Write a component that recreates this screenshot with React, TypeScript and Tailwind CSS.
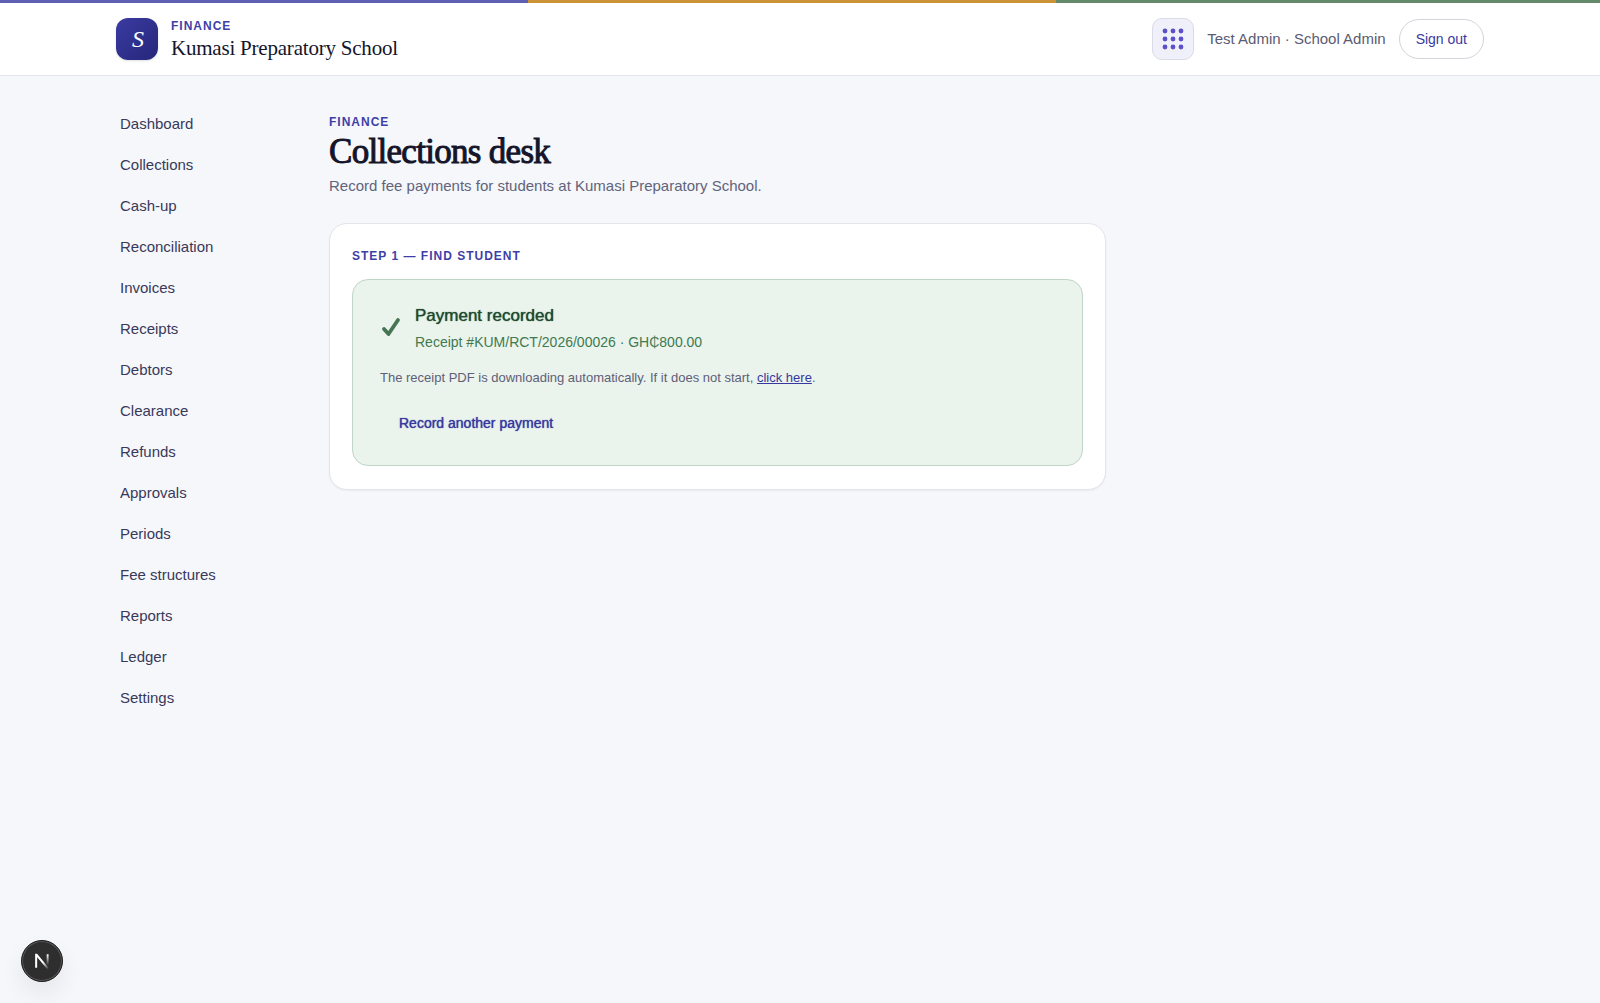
const navItems = [
  'Dashboard',
  'Collections',
  'Cash-up',
  'Reconciliation',
  'Invoices',
  'Receipts',
  'Debtors',
  'Clearance',
  'Refunds',
  'Approvals',
  'Periods',
  'Fee structures',
  'Reports',
  'Ledger',
  'Settings',
];

const SERIF = "font-['Liberation_Serif',serif]";

function AppsIcon() {
  return (
    <svg viewBox="0 0 22 22" className="w-[22px] h-[22px]" fill="#5b50c8" aria-hidden="true">
      {[3, 11, 19].map((cy) =>
        [3, 11, 19].map((cx) => <circle key={`${cx}-${cy}`} cx={cx} cy={cy} r="2.4" />)
      )}
    </svg>
  );
}

function Header() {
  return (
    <header className="bg-white border-b border-[#e3e5ec]">
      <div className="grid grid-cols-[33%_33%_34%] h-[3px]">
        <div className="bg-[#5e5fb0]" />
        <div className="bg-[#cc9238]" />
        <div className="bg-[#65896b]" />
      </div>
      <div className="max-w-[1368px] mx-auto py-[13px] flex items-center justify-between">
        <div className="flex items-center gap-[13px]">
          <div
            className={`w-[42px] h-[42px] rounded-xl bg-linear-to-br from-[#3b3ba3] to-[#26267a] shadow-sm flex items-center justify-center pl-0.5 text-white italic text-2xl ${SERIF}`}
          >
            S
          </div>
          <div className="pt-0.5">
            <p className="text-xs leading-4 font-bold tracking-[1px] text-[#3f3fa8]">FINANCE</p>
            <p className={`text-[21px] leading-7 tracking-[-0.01em] text-[#15152a] ${SERIF}`}>
              Kumasi Preparatory School
            </p>
          </div>
        </div>

        <div className="flex items-center gap-[13px]">
          <button
            type="button"
            aria-label="Switch app"
            className="w-[42px] h-[42px] rounded-[10px] bg-[#eff0fa] border border-[#dadbe8] flex items-center justify-center"
          >
            <AppsIcon />
          </button>
          <span className="text-[15px] text-[#5b5b73]">Test Admin · School Admin</span>
          <button
            type="button"
            className="h-10 px-4 rounded-full bg-white border border-[#d3d4da] text-sm text-[#3838a0]"
          >
            Sign out
          </button>
        </div>
      </div>
    </header>
  );
}

function Sidebar() {
  return (
    <nav className="w-[213px] shrink-0">
      <ul>
        {navItems.map((item) => (
          <li key={item}>
            <a href="#" className="block px-1 text-[15px] leading-[41px] text-[#39395a]">
              {item}
            </a>
          </li>
        ))}
      </ul>
    </nav>
  );
}

function PaymentRecorded() {
  return (
    <div className="rounded-2xl bg-[#eaf3ec] border border-[#c0d6c7] px-[27px] pt-[22px] pb-[22px]">
      <div className="flex items-center gap-3.5">
        <svg viewBox="0 0 21 24" className="w-[21px] h-6" fill="none" aria-hidden="true">
          <path
            d="M4 13 L8.5 18 L18 4"
            stroke="#457552"
            strokeWidth="3.8"
            strokeLinecap="round"
            strokeLinejoin="round"
          />
        </svg>
        <div>
          <h2 className="text-[17px] leading-7 text-[#1f4a2e] [text-shadow:0_0_1px_currentColor]">
            Payment recorded
          </h2>
          <p className="text-sm leading-6 text-[#3f7a50]">Receipt #KUM/RCT/2026/00026 · GH₵800.00</p>
        </div>
      </div>
      <p className="mt-3.5 text-[13px] leading-5 text-[#5f6078]">
        The receipt PDF is downloading automatically. If it does not start,{' '}
        <a href="#" className="text-[#3838a0] underline">
          click here
        </a>
        .
      </p>
      <button
        type="button"
        className="mt-[15px] h-10 px-[19px] text-sm text-[#3838a0] [text-shadow:0_0_1px_currentColor]"
      >
        Record another payment
      </button>
    </div>
  );
}

// Floating Next.js dev tools button
function DevBadge() {
  return (
    <button
      type="button"
      aria-label="Open Next.js dev tools"
      className="fixed left-[21px] bottom-[21px] w-[42px] h-[42px] rounded-full bg-[#2e2e2e] border border-[#1c1c1c] ring-1 ring-inset ring-[#585858] shadow-[0_12px_24px_rgba(0,0,0,0.07)] flex items-center justify-center"
    >
      <svg viewBox="0 0 16 16" className="w-[18px] h-[18px]" fill="none" aria-hidden="true">
        <defs>
          <linearGradient id="stem" x1="0" y1="2" x2="0" y2="12" gradientUnits="userSpaceOnUse">
            <stop stopColor="#fff" />
            <stop offset="1" stopColor="#fff" stopOpacity="0" />
          </linearGradient>
          <linearGradient id="slash" x1="9" y1="9" x2="14" y2="15" gradientUnits="userSpaceOnUse">
            <stop stopColor="#fff" />
            <stop offset="1" stopColor="#fff" stopOpacity="0" />
          </linearGradient>
        </defs>
        <path d="M13 2 V12" stroke="url(#stem)" strokeWidth="1.7" />
        <path d="M2.8 14 V2.5 H3.2 L13.5 15" stroke="url(#slash)" strokeWidth="1.8" />
      </svg>
    </button>
  );
}

export default function App() {
  return (
    <div className="min-h-screen bg-[#f5f7fb] font-['Liberation_Sans',Arial,sans-serif]">
      <Header />
      <div className="max-w-[1368px] mx-auto pt-[27px] flex">
        <Sidebar />
        <main className="flex-1 pt-[11px]">
          <div className="max-w-[777px]">
            <p className="text-xs leading-4 font-bold tracking-[1px] text-[#3f3fa8]">FINANCE</p>
            <h1
              className={`text-[35px] leading-[44px] tracking-[-0.02em] text-[#15152a] [-webkit-text-stroke:1px_currentColor] ${SERIF}`}
            >
              Collections desk
            </h1>
            <p className="text-[15px] leading-6 text-[#62637a]">
              Record fee payments for students at Kumasi Preparatory School.
            </p>

            <section className="mt-[25px] rounded-[18px] bg-white border border-[#e3e5ec] shadow-xs px-[22px] pt-6 pb-[23px]">
              <p className="mb-[15px] text-xs leading-4 font-bold tracking-[1px] text-[#3f3fa8]">
                STEP 1 — FIND STUDENT
              </p>
              <PaymentRecorded />
            </section>
          </div>
        </main>
      </div>
      <DevBadge />
    </div>
  );
}
